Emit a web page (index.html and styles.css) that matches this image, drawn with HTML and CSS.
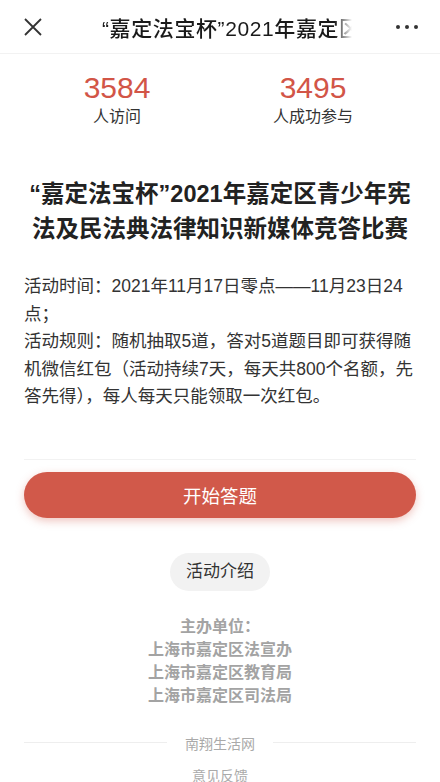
FILE: index.html
```html
<!DOCTYPE html>
<html>
<head>
    <meta charset="utf-8">
    <title>嘉定法宝杯</title>
    <link rel="stylesheet" href="styles.css">
</head>
<body>
<div class="topbar">
    <div class="topbar-left">
        <svg class="icon-close" width="18" height="18" viewBox="0 0 18 18">
            <path d="M1 1 L17 17 M17 1 L1 17" stroke="#333" stroke-width="1.8" fill="none"/>
        </svg>
    </div>
    <div class="topbar-title">“嘉定法宝杯”2021年嘉定区青少年宪法及民法典法律知识新媒体竞答比赛</div>
    <div class="topbar-right">
        <span class="dot"></span><span class="dot"></span><span class="dot"></span>
    </div>
</div>

<div class="stats">
    <div class="stat">
        <div class="stat-num">3584</div>
        <div class="stat-label">人访问</div>
    </div>
    <div class="stat">
        <div class="stat-num">3495</div>
        <div class="stat-label">人成功参与</div>
    </div>
</div>

<div class="content">
    <h1 class="title">“嘉定法宝杯”2021年嘉定区青少年宪法及民法典法律知识新媒体竞答比赛</h1>
    <div class="desc">
        <p>活动时间：2021年11月17日零点——11月23日24点；</p>
        <p>活动规则：随机抽取5道，答对5道题目即可获得随机微信红包（活动持续7天，每天共800个名额，先答先得），每人每天只能领取一次红包。</p>
    </div>
    <div class="divider"></div>
    <button class="btn-start">开始答题</button>
    <div class="intro-wrap">
        <span class="btn-intro">活动介绍</span>
    </div>
    <div class="org">
        <div>主办单位：</div>
        <div>上海市嘉定区法宣办</div>
        <div>上海市嘉定区教育局</div>
        <div>上海市嘉定区司法局</div>
    </div>
    <div class="footer-line">
        <span class="line"></span>
        <span class="footer-text">南翔生活网</span>
        <span class="line"></span>
    </div>
    <div class="feedback">意见反馈</div>
</div>
</body>
</html>
```

FILE: styles.css
```css
body {
    margin: 0;
    font-family: "Liberation Sans", "Noto Sans CJK SC", sans-serif;
    background: #fff;
    color: #333;
}
.topbar {
    display: grid;
    grid-template-columns: 102px 250px 1fr;
    align-items: center;
    height: 53px;
    border-bottom: 1px solid #f2f2f2;
}
.topbar-left {
    padding-left: 24px;
    display: flex;
    align-items: center;
}
.icon-close {
    display: block;
}
.topbar-title {
    font-size: 21px;
    letter-spacing: 0.6px;
    font-weight: 500;
    color: #1a1a1a;
    white-space: nowrap;
    overflow: hidden;
    -webkit-mask-image: linear-gradient(to right, #000 93%, transparent 100%);
    mask-image: linear-gradient(to right, #000 93%, transparent 100%);
}
.topbar-right {
    display: flex;
    justify-content: flex-end;
    gap: 5px;
    padding-right: 22px;
}
.dot {
    width: 4px;
    height: 4px;
    border-radius: 50%;
    background: #333;
}
.stats {
    display: grid;
    grid-template-columns: 196px 196px;
    padding: 16px 0 0 19px;
}
.stat {
    text-align: center;
}
.stat-num {
    font-size: 30px;
    line-height: 36px;
    color: #d25547;
}
.stat-label {
    font-size: 16px;
    line-height: 22px;
    color: #333;
}
.content {
    padding: 0 24px;
}
.title {
    margin: 49px 0 0;
    text-align: center;
    font-size: 23.5px;
    line-height: 35px;
    font-weight: bold;
    color: #222;
}
.desc {
    margin-top: 26px;
    font-size: 17.5px;
    line-height: 27.5px;
    color: #333;
}
.desc p {
    margin: 0;
}
.divider {
    margin-top: 48px;
    height: 1px;
    background: #f2f2f2;
}
.btn-start {
    display: block;
    width: 100%;
    height: 46px;
    margin-top: 12px;
    border: none;
    border-radius: 23px;
    background: #d1594a;
    color: #fff;
    font-family: inherit;
    font-size: 18.5px;
    box-shadow: 0 3px 8px rgba(209, 89, 74, 0.35);
}
.intro-wrap {
    margin-top: 35px;
    text-align: center;
}
.btn-intro {
    display: inline-block;
    padding: 0 16px;
    height: 38px;
    line-height: 38px;
    border-radius: 19px;
    background: #f2f2f2;
    font-size: 17px;
    color: #333;
}
.org {
    margin-top: 24px;
    text-align: center;
    font-size: 16px;
    line-height: 23px;
    font-weight: bold;
    color: #a3a3a3;
}
.footer-line {
    display: flex;
    align-items: center;
    gap: 18px;
    margin-top: 26px;
}
.line {
    flex: 1;
    height: 1px;
    background: #eee;
}
.footer-text {
    font-size: 14px;
    color: #aaa;
}
.feedback {
    margin-top: 12px;
    text-align: center;
    font-size: 14px;
    color: #aaa;
}
```
